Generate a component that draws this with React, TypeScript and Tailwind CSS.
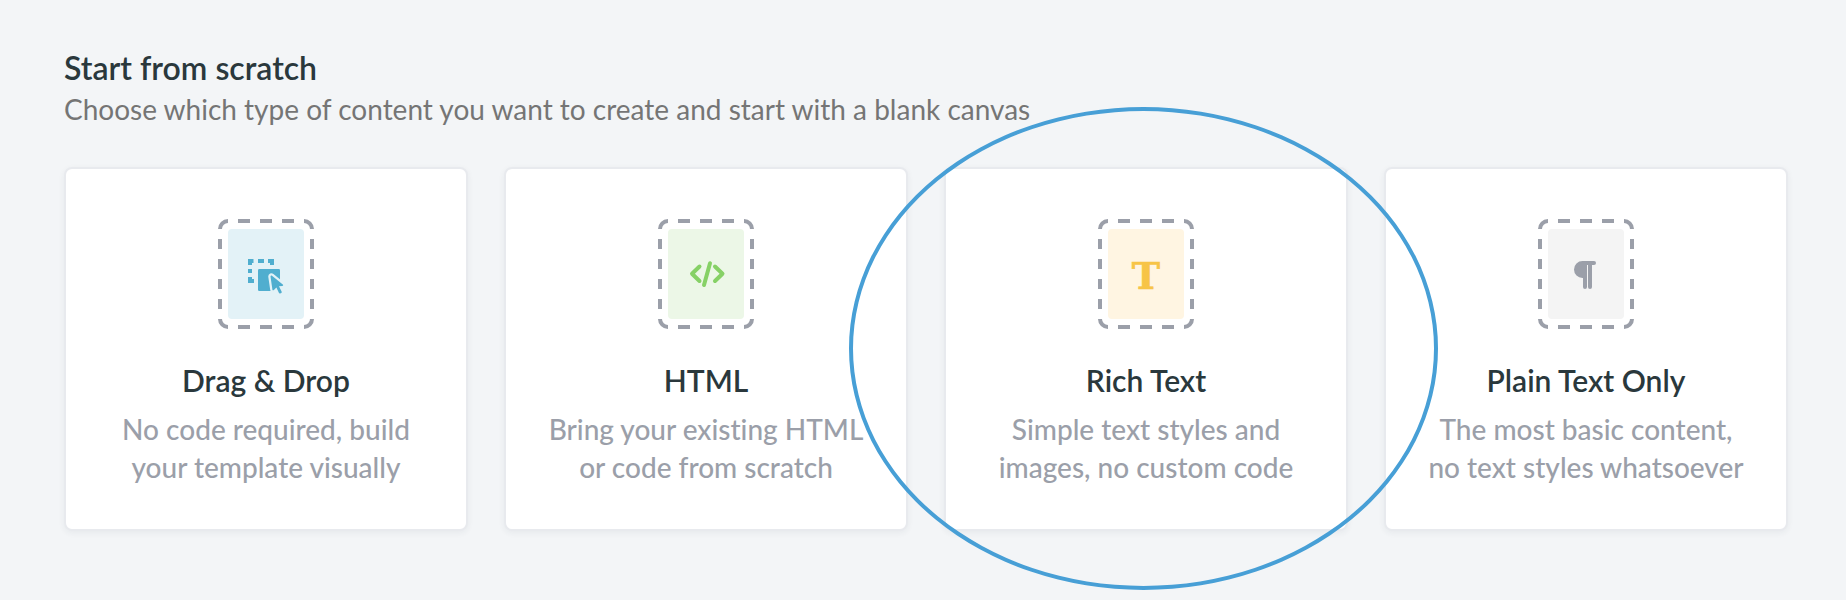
import type { ReactNode } from "react";

const DragDropIcon = () => (
  <>
    <path
      fill="#50aecf"
      d="M30 40h5.500v4H34v2h-4zM40 40h6v4h-6zM50 40h6v6h-4v-2h-2zM30 50h4v4h-4zM30 58h4v2h2v4h-6z"
    />
    <rect x="40" y="50" width="22" height="22" rx="1.200" fill="#50aecf" />
    <path
      d="M52.500 57.500c0-.8.900-1.200 1.500-.7l10.800 8.700c.7.500.3 1.500-.5 1.500l-3.300.2 2.700 5.600c.2.400 0 .9-.4 1.100l-1.200.6c-.4.200-.9 0-1.100-.4l-2.600-5.500-2.500 2.500c-.6.500-1.500.1-1.500-.7z"
      fill="#50aecf"
      stroke="#e3f2f7"
      strokeWidth="4.500"
      strokeLinejoin="round"
      paintOrder="stroke"
    />
  </>
);

const HtmlIcon = () => (
  <path
    d="M41.500 47.500 34 54.700l7.500 7.300M52 44.200l-6 21.800M57 47.500l7.500 7.200L57 62"
    fill="none"
    stroke="#86d166"
    strokeWidth="4"
    strokeLinecap="round"
    strokeLinejoin="round"
  />
);

const RichTextIcon = () => (
  <text
    x="48"
    y="70"
    textAnchor="middle"
    fill="#f7c447"
    stroke="#f7c447"
    strokeWidth="0.600"
    className="font-['DejaVu_Serif','Liberation_Serif',serif] text-[38px] font-bold">
    T
  </text>
);

const PlainTextIcon = () => (
  <path
    fill="#9b9fa9"
    d="M44.500 42H56a2 2 0 0 1 0 4h-2v22a2 2 0 0 1-4 0V46h-1v22a2 2 0 0 1-4 0v-9h-.5a8.500 8.500 0 0 1 0-17z"
  />
);

const options = [
  {
    title: "Drag & Drop",
    lines: ["No code required, build", "your template visually"],
    tint: "#e3f2f7",
    icon: <DragDropIcon />,
  },
  {
    title: "HTML",
    lines: ["Bring your existing HTML", "or code from scratch"],
    tint: "#ecf7e7",
    icon: <HtmlIcon />,
  },
  {
    title: "Rich Text",
    lines: ["Simple text styles and", "images, no custom code"],
    tint: "#fff5e2",
    icon: <RichTextIcon />,
    highlighted: true,
  },
  {
    title: "Plain Text Only",
    lines: ["The most basic content,", "no text styles whatsoever"],
    tint: "#f4f4f4",
    icon: <PlainTextIcon />,
  },
];

function PageIcon({ tint, children }: { tint: string; children: ReactNode }) {
  return (
    <svg viewBox="0 0 96 110" className="block h-[110px] w-24" aria-hidden="true">
      <rect x="10" y="10" width="76" height="90" rx="4" fill={tint} />
      <path
        d="M2 10a8 8 0 0 1 8-8M86 2a8 8 0 0 1 8 8M94 100a8 8 0 0 1-8 8M10 108a8 8 0 0 1-8-8M20 2h12M42 2h12M64 2h12M20 108h12M42 108h12M64 108h12M2 20v10M2 40v10M2 60v10M2 80v10M94 20v10M94 40v10M94 60v10M94 80v10"
        fill="none"
        stroke="#9b9fa9"
        strokeWidth="4"
      />
      {children}
    </svg>
  );
}

export default function App() {
  return (
    <main className="min-h-screen overflow-hidden bg-[#f3f5f7] pt-[47px] pr-[58px] pb-[69px] pl-16 font-['Lato','Open_Sans',sans-serif] [font-variant-ligatures:none]">
      <h1 className="text-[32px] leading-[42px] font-semibold text-[#2a383c]">Start from scratch</h1>
      <p className="text-[28px] leading-[40px] text-[#757575]">
        Choose which type of content you want to create and start with a blank canvas
      </p>

      <ul className="mt-[38px] grid grid-cols-4 gap-9">
        {options.map((option) => (
          <li key={option.title} className="relative">
            <button
              type="button"
              className="flex w-full flex-col items-center rounded-lg border-2 border-[#e8eaee] bg-white pt-[50px] pb-[43px] text-center shadow-[0_2px_6px_rgba(40,50,70,0.06)]">
              <PageIcon tint={option.tint}>{option.icon}</PageIcon>
              <span className="mt-[31px] text-[30px] leading-[40px] font-semibold text-[#2a383c]">
                {option.title}
              </span>
              <span className="mt-[10px] text-[28px] leading-[38px] font-medium text-[#9b9fa9]">
                {option.lines[0]}
                <br />
                {option.lines[1]}
              </span>
            </button>
            {option.highlighted && (
              <span className="pointer-events-none absolute -top-[60px] -right-[90px] -bottom-[59px] -left-[95px] z-10 rounded-[50%] border-4 border-[#479fd6]" />
            )}
          </li>
        ))}
      </ul>
    </main>
  );
}
